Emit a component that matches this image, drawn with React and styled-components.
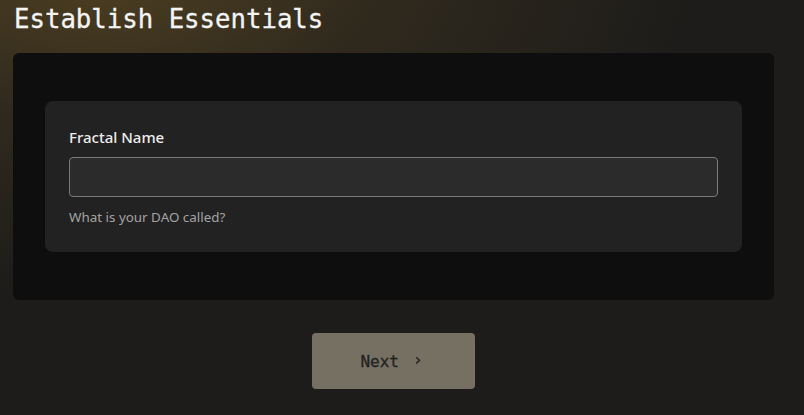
import React, { useState } from "react";
import styled, { createGlobalStyle } from "styled-components";

const GlobalStyle = createGlobalStyle`
    html, body {
        margin: 0;
        padding: 0;
        background: #1d1c1a;
    }
    * {
        box-sizing: border-box;
    }
`;

const App = () => {
    const [name, setName] = useState(""); // DAO 이름

    return (
        <>
            <GlobalStyle />
            <Page>
                <Title>Establish Essentials</Title>
                <Panel>
                    <Card>
                        <Label htmlFor="fractal-name">Fractal Name</Label>
                        <Input
                            id="fractal-name"
                            value={name}
                            onChange={(e) => setName(e.target.value)}
                        />
                        <Helper>What is your DAO called?</Helper>
                    </Card>
                </Panel>
                <Footer>
                    <NextButton disabled={!name}>
                        Next <Chevron>›</Chevron>
                    </NextButton>
                </Footer>
            </Page>
        </>
    );
};

const Page = styled.main`
    display: flex;
    flex-direction: column;
    width: 804px;
    height: 415px;
    padding: 3px 30px 0 13px;
    background:
        radial-gradient(ellipse 600px 340px at 100px -40px, rgba(82, 66, 34, 0.95) 0%, rgba(62, 52, 32, 0.6) 45%, rgba(30, 29, 26, 0) 100%),
        #1d1c1a;
    overflow: hidden;
`;

const Title = styled.h1`
    margin: 0 0 0 1px;
    height: 50px;
    font-family: "DejaVu Sans Mono", "Liberation Mono", monospace;
    font-size: 25.7px;
    font-weight: 400;
    line-height: 32px;
    color: #f4f4f4;
    -webkit-text-stroke: 0.3px #f4f4f4;
`;

const Panel = styled.section`
    display: flex;
    flex-direction: column;
    width: 761px;
    padding: 48px 32px 48px 32px;
    background: #0e0e0e;
    border-radius: 6px;
`;

const Card = styled.div`
    display: flex;
    flex-direction: column;
    padding: 26px 24px 26px 24px;
    background: #222222;
    border-radius: 8px;
`;

const Label = styled.label`
    font-family: "Noto Sans", "Open Sans", sans-serif;
    font-size: 15px;
    font-weight: 500;
    line-height: 20px;
    color: #ececec;
    margin-bottom: 10px;
`;

const Input = styled.input`
    width: 100%;
    height: 40px;
    padding: 0 12px;
    background: #2b2b2b;
    border: 1px solid #7a7a7a;
    border-radius: 4px;
    color: #eeeeee;
    font-family: "Noto Sans", sans-serif;
    font-size: 14px;
    outline: none;
`;

const Helper = styled.span`
    margin-top: 11px;
    font-family: "Noto Sans", "Open Sans", sans-serif;
    font-size: 13.4px;
    line-height: 18px;
    color: #a3a3a3;
`;

const Footer = styled.div`
    display: flex;
    justify-content: center;
    width: 761px;
    margin-top: 33px;
`;

const NextButton = styled.button`
    display: flex;
    justify-content: center;
    align-items: center;
    gap: 14px;
    width: 163px;
    height: 56px;
    padding-left: 2px;
    background: #757062;
    border: none;
    border-radius: 4px;
    color: #232321;
    font-family: "DejaVu Sans Mono", "Liberation Mono", monospace;
    font-size: 16px;
    font-weight: 400;
    -webkit-text-stroke: 0.3px #232321;
    cursor: pointer;

    &:disabled {
        cursor: default;
    }
`;

const Chevron = styled.span`
    font-size: 16px;
    line-height: 1;
    margin-top: -3px;
`;

export default App;
